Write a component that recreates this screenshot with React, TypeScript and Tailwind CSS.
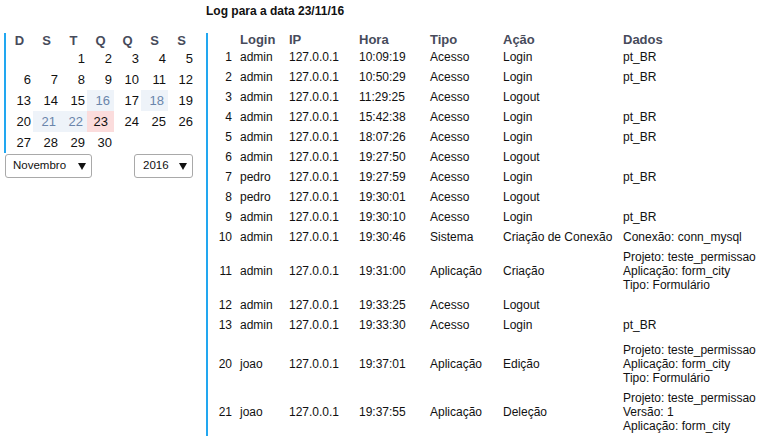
type LogRow = {
  n: number;
  login: string;
  hora: string;
  tipo: string;
  acao: string;
  dados: string[];
  extraTop?: boolean;
};

const logRows: LogRow[] = [
  { n: 1, login: 'admin', hora: '10:09:19', tipo: 'Acesso', acao: 'Login', dados: ['pt_BR'] },
  { n: 2, login: 'admin', hora: '10:50:29', tipo: 'Acesso', acao: 'Login', dados: ['pt_BR'] },
  { n: 3, login: 'admin', hora: '11:29:25', tipo: 'Acesso', acao: 'Logout', dados: [] },
  { n: 4, login: 'admin', hora: '15:42:38', tipo: 'Acesso', acao: 'Login', dados: ['pt_BR'] },
  { n: 5, login: 'admin', hora: '18:07:26', tipo: 'Acesso', acao: 'Login', dados: ['pt_BR'] },
  { n: 6, login: 'admin', hora: '19:27:50', tipo: 'Acesso', acao: 'Logout', dados: [] },
  { n: 7, login: 'pedro', hora: '19:27:59', tipo: 'Acesso', acao: 'Login', dados: ['pt_BR'] },
  { n: 8, login: 'pedro', hora: '19:30:01', tipo: 'Acesso', acao: 'Logout', dados: [] },
  { n: 9, login: 'admin', hora: '19:30:10', tipo: 'Acesso', acao: 'Login', dados: ['pt_BR'] },
  { n: 10, login: 'admin', hora: '19:30:46', tipo: 'Sistema', acao: 'Criação de Conexão', dados: ['Conexão: conn_mysql'] },
  {
    n: 11,
    login: 'admin',
    hora: '19:31:00',
    tipo: 'Aplicação',
    acao: 'Criação',
    dados: ['Projeto: teste_permissao', 'Aplicação: form_city', 'Tipo: Formulário'],
  },
  { n: 12, login: 'admin', hora: '19:33:25', tipo: 'Acesso', acao: 'Logout', dados: [] },
  { n: 13, login: 'admin', hora: '19:33:30', tipo: 'Acesso', acao: 'Login', dados: ['pt_BR'] },
  {
    n: 20,
    login: 'joao',
    hora: '19:37:01',
    tipo: 'Aplicação',
    acao: 'Edição',
    dados: ['Projeto: teste_permissao', 'Aplicação: form_city', 'Tipo: Formulário'],
    extraTop: true,
  },
  {
    n: 21,
    login: 'joao',
    hora: '19:37:55',
    tipo: 'Aplicação',
    acao: 'Deleção',
    dados: ['Projeto: teste_permissao', 'Versão: 1', 'Aplicação: form_city'],
  },
];

const weekDays = ['D', 'S', 'T', 'Q', 'Q', 'S', 'S'];

// November 2016 starts on a Tuesday
const weeks: (number | null)[][] = [
  [null, null, 1, 2, 3, 4, 5],
  [6, 7, 8, 9, 10, 11, 12],
  [13, 14, 15, 16, 17, 18, 19],
  [20, 21, 22, 23, 24, 25, 26],
  [27, 28, 29, 30, null, null, null],
];

const marked = [16, 18, 21, 22];
const selected = 23;

function DayCell({ day }: { day: number | null }) {
  if (day === null) return <td className="w-[27px] h-[21px]" />;
  if (day === selected) {
    return <td className="w-[27px] h-[21px] bg-[#fbdcdc] text-right pr-[6px] text-[#111]">{day}</td>;
  }
  if (marked.includes(day)) {
    return <td className="w-[27px] h-[21px] bg-[#eef3f9] text-right pr-[4px] text-[#6a85ab]">{day}</td>;
  }
  return <td className="w-[27px] h-[21px] text-right pr-[2px] text-[#111]">{day}</td>;
}

function Caret() {
  return (
    <svg width="8" height="7" viewBox="0 0 8 7" className="shrink-0">
      <path d="M0 0h8L4 7z" fill="#111" />
    </svg>
  );
}

function Calendar() {
  return (
    <div className="w-[206px] pt-[33px]">
      <div className="ml-[4px] border-l-2 border-[#22a7f0]">
        <table className="table-fixed border-collapse text-[13px] leading-[15px]">
          <thead>
            <tr>
              {weekDays.map((d, i) => (
                <th key={i} className="w-[27px] h-[14px] p-0 text-center font-bold text-[#474b5b]">
                  {d}
                </th>
              ))}
            </tr>
          </thead>
          <tbody>
            {weeks.map((week, i) => (
              <tr key={i}>
                {week.map((day, j) => (
                  <DayCell key={j} day={day} />
                ))}
              </tr>
            ))}
          </tbody>
        </table>
      </div>
      <div className="mt-[1px] flex justify-between pl-[5px] pr-[13px] text-[11.5px] text-[#111]">
        <div className="flex h-[24px] w-[87px] items-center justify-between rounded-[3px] border border-[#a9a9a9] pl-[7px] pr-[5px]">
          <span>Novembro</span>
          <Caret />
        </div>
        <div className="flex h-[24px] w-[59px] items-center justify-between rounded-[3px] border border-[#a9a9a9] pl-[8px] pr-[5px]">
          <span>2016</span>
          <Caret />
        </div>
      </div>
    </div>
  );
}

function LogTable() {
  return (
    <div className="flex-1">
      <div className="h-[33px] pt-[4px] text-[12px] font-bold leading-[14px] text-[#111]">
        Log para a data 23/11/16
      </div>
      <div className="border-l-2 border-[#22a7f0]">
        <table className="table-fixed border-collapse text-[12px] leading-[14px] text-[#111]">
          <colgroup>
            <col className="w-[28px]" />
            <col className="w-[49px]" />
            <col className="w-[70px]" />
            <col className="w-[71px]" />
            <col className="w-[73px]" />
            <col className="w-[120px]" />
            <col className="w-[150px]" />
          </colgroup>
          <thead>
            <tr className="text-[13px] font-bold text-[#474b5b]">
              <th className="h-[14px] p-0" />
              <th className="h-[14px] py-0 pl-[4px] text-left">Login</th>
              <th className="h-[14px] py-0 pl-[4px] text-left">IP</th>
              <th className="h-[14px] py-0 pl-[4px] text-left">Hora</th>
              <th className="h-[14px] py-0 pl-[4px] text-left">Tipo</th>
              <th className="h-[14px] py-0 pl-[4px] text-left">Ação</th>
              <th className="h-[14px] py-0 pl-[4px] text-left">Dados</th>
            </tr>
          </thead>
          <tbody>
            {logRows.map((row) => {
              const pad = row.extraTop ? 'pt-[8px] pb-[3px]' : 'py-[3px]';
              return (
                <tr key={row.n} className="align-middle">
                  <td className={`${pad} pr-[4px] text-right`}>{row.n}</td>
                  <td className={`${pad} pl-[4px] whitespace-nowrap`}>{row.login}</td>
                  <td className={`${pad} pl-[4px] whitespace-nowrap`}>127.0.0.1</td>
                  <td className={`${pad} pl-[4px] whitespace-nowrap`}>{row.hora}</td>
                  <td className={`${pad} pl-[4px] whitespace-nowrap`}>{row.tipo}</td>
                  <td className={`${pad} pl-[4px] whitespace-nowrap`}>{row.acao}</td>
                  <td className={`${pad} pl-[4px] whitespace-nowrap`}>
                    {row.dados.length === 0 ? (
                      <span>&nbsp;</span>
                    ) : (
                      row.dados.map((line) => <div key={line}>{line}</div>)
                    )}
                  </td>
                </tr>
              );
            })}
          </tbody>
        </table>
      </div>
    </div>
  );
}

export default function App() {
  return (
    <div className="flex min-h-screen bg-white font-['Liberation_Sans',Arial,sans-serif]">
      <Calendar />
      <LogTable />
    </div>
  );
}
